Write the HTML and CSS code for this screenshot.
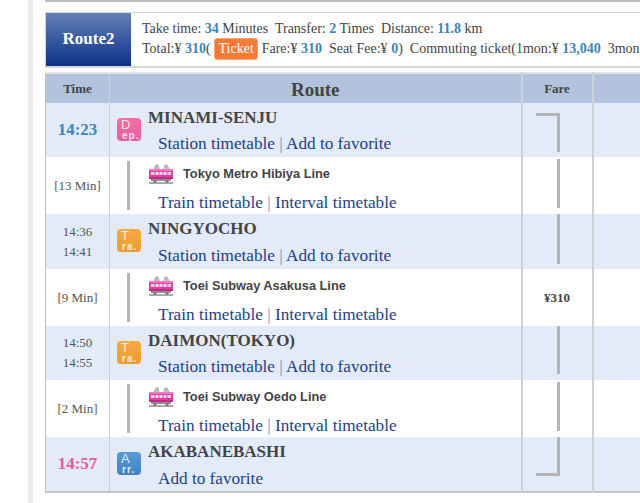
FILE: index.html
```html
<!DOCTYPE html>
<html lang="en">
<head>
<meta charset="utf-8">
<title>Route2</title>
<link rel="stylesheet" href="styles.css">
</head>
<body>
<svg class="defs" width="0" height="0" aria-hidden="true">
  <symbol id="train" viewBox="0 0 24 20">
    <path d="M5 5 L7 1 L9 1 L10 5 M15 5 L16 1 L18 1 L20 5" fill="#c9b8c4" stroke="#b3a7b0" stroke-width="1"/>
    <rect x="0" y="5" width="24" height="10" rx="1" fill="#e2409f"/>
    <rect x="0" y="5" width="24" height="2" fill="#f07cc0"/>
    <rect x="2" y="8" width="20" height="3" fill="#fbd8ee"/>
    <path d="M6 8v3M10 8v3M14 8v3M18 8v3" stroke="#e2409f" stroke-width="1"/>
    <rect x="0" y="13" width="24" height="2" fill="#c4288a"/>
    <rect x="2" y="15" width="20" height="2" fill="#8f8f8f"/>
    <rect x="0" y="18" width="24" height="2" fill="#a8a8a8"/>
    <circle cx="6" cy="17.5" r="1.5" fill="#777"/>
    <circle cx="18" cy="17.5" r="1.5" fill="#777"/>
  </symbol>
</svg>
<main class="page">
  <div class="prev-end"></div>
  <section class="summary">
    <h2 class="summary-title">Route2</h2>
    <div class="summary-info">
      <p class="info-line">Take time: <b>34</b> Minutes&nbsp; Transfer: <b>2</b> Times&nbsp; Distance: <b>11.8</b> km</p>
      <p class="info-line">Total:¥ <b>310</b>( <span class="ticket">Ticket</span> Fare:¥ <b>310</b>&nbsp; Seat Fee:¥ <b>0</b>)&nbsp; Commuting ticket(1mon:¥ <b>13,040</b>&nbsp; 3mon</p>
    </div>
  </section>
  <table class="route-table">
    <colgroup><col class="c-time"><col class="c-route"><col class="c-fare"><col class="c-extra"></colgroup>
    <thead>
      <tr>
        <th class="th-small">Time</th>
        <th class="th-route">Route</th>
        <th class="th-small">Fare</th>
        <th></th>
      </tr>
    </thead>
    <tbody>
      <tr class="station h54">
        <td class="time big blue">14:23</td>
        <td>
          <div class="st">
            <div class="badge dep"><span>D</span><span class="sub">ep.</span></div>
            <div class="st-text">
              <div class="st-name">MINAMI-SENJU</div>
              <div class="links"><a>Station timetable</a> | <a>Add to favorite</a></div>
            </div>
          </div>
        </td>
        <td><div class="seg seg-top"></div></td>
        <td></td>
      </tr>
      <tr class="line h57">
        <td class="time">[13 Min]</td>
        <td>
          <div class="ln">
            <div class="ln-text">
              <div class="ln-name"><svg class="train"><use href="#train"/></svg><span class="ln-label">Tokyo Metro Hibiya Line</span></div>
              <div class="links"><a>Train timetable</a> | <a>Interval timetable</a></div>
            </div>
          </div>
        </td>
        <td><div class="seg seg-a"></div></td>
        <td></td>
      </tr>
      <tr class="station h55">
        <td class="time">14:36<br>14:41</td>
        <td>
          <div class="st">
            <div class="badge tra"><span>T</span><span class="sub">ra.</span></div>
            <div class="st-text">
              <div class="st-name">NINGYOCHO</div>
              <div class="links"><a>Station timetable</a> | <a>Add to favorite</a></div>
            </div>
          </div>
        </td>
        <td><div class="seg seg-b"></div></td>
        <td></td>
      </tr>
      <tr class="line h57">
        <td class="time">[9 Min]</td>
        <td>
          <div class="ln">
            <div class="ln-text">
              <div class="ln-name"><svg class="train"><use href="#train"/></svg><span class="ln-label">Toei Subway Asakusa Line</span></div>
              <div class="links"><a>Train timetable</a> | <a>Interval timetable</a></div>
            </div>
          </div>
        </td>
        <td class="fare-val">¥310</td>
        <td></td>
      </tr>
      <tr class="station h54">
        <td class="time">14:50<br>14:55</td>
        <td>
          <div class="st">
            <div class="badge tra"><span>T</span><span class="sub">ra.</span></div>
            <div class="st-text">
              <div class="st-name">DAIMON(TOKYO)</div>
              <div class="links"><a>Station timetable</a> | <a>Add to favorite</a></div>
            </div>
          </div>
        </td>
        <td><div class="seg seg-c"></div></td>
        <td></td>
      </tr>
      <tr class="line h57">
        <td class="time">[2 Min]</td>
        <td>
          <div class="ln">
            <div class="ln-text">
              <div class="ln-name"><svg class="train"><use href="#train"/></svg><span class="ln-label">Toei Subway Oedo Line</span></div>
              <div class="links"><a>Train timetable</a> | <a>Interval timetable</a></div>
            </div>
          </div>
        </td>
        <td><div class="seg seg-a"></div></td>
        <td></td>
      </tr>
      <tr class="station h55">
        <td class="time big pink">14:57</td>
        <td>
          <div class="st">
            <div class="badge arr"><span>A</span><span class="sub">rr.</span></div>
            <div class="st-text">
              <div class="st-name">AKABANEBASHI</div>
              <div class="links"><a>Add to favorite</a></div>
            </div>
          </div>
        </td>
        <td><div class="seg seg-bottom"></div></td>
        <td></td>
      </tr>
    </tbody>
  </table>
</main>
</body>
</html>
```
FILE: styles.css
```css
* { box-sizing: border-box; }
html, body { margin: 0; padding: 0; background: #fff; }
body { height: 503px; overflow: hidden; font-family: "Liberation Serif", serif; color: #444; }
.defs { position: absolute; }
.page {
  margin-left: 28px;
  width: 640px;
  height: 503px;
  padding-left: 12px;
  border-left: 5px solid #ececec;
  overflow: hidden;
}
.prev-end { height: 2px; background: #bdbdbd; margin-bottom: 10px; }
.summary {
  display: flex;
  height: 56px;
  width: 640px;
  border: 2px solid #d6d6d6;
  border-width: 1px 0 2px 1px;
}
.summary-title {
  width: 85px;
  margin: 0;
  padding-bottom: 2px;
  flex: none;
  display: flex;
  align-items: center;
  justify-content: center;
  font-size: 17px;
  color: #fff;
  background: linear-gradient(#6480b8, #0c3189);
}
.summary-info { padding: 6px 0 0 11px; }
.info-line {
  margin: 0;
  height: 20px;
  line-height: 20px;
  font-size: 14px;
  white-space: nowrap;
  color: #444;
}
.info-line b { color: #3f83bf; }
.ticket {
  display: inline-block;
  height: 22px;
  width: 44px;
  line-height: 20px;
  text-align: center;
  color: #fff;
  background: #f47a35;
  border: 1px solid #fba56f;
  border-radius: 3px;
  vertical-align: middle;
  margin: -2px 0 0 0;
}
.route-table {
  margin-top: 4px;
  table-layout: fixed;
  width: 609px;
  border-collapse: collapse;
  border-left: 1px solid #bdbdbd;
  border-bottom: 2px solid #c4c4c4;
}
.c-time { width: 64px; }
.c-route { width: 412px; }
.c-fare { width: 71px; }
.c-extra { width: 62px; }
th {
  height: 30px;
  padding: 0;
  background: #b3c3dd;
  border-right: 2px solid #ccd3de;
  border-top: 2px solid #e2e2e2;
  color: #444;
}
.th-small { font-size: 13px; }
.th-route { font-size: 19px; padding-top: 2px; }
td {
  padding: 0;
  vertical-align: top;
  border-right: 2px solid #d0d0d0;
}
td:first-child, th:first-child { border-right-width: 1px; }
.station td { background: #e3ebf9; }
.h54 { height: 54px; }
.h55 { height: 55px; }
.h57 { height: 57px; }
.time {
  vertical-align: middle;
  text-align: center;
  font-size: 13px;
  line-height: 20px;
  color: #555;
}
.big { font-size: 17px; font-weight: bold; }
.blue { color: #3f83bf; }
.pink { color: #ea5a9c; }
.st { display: flex; padding-left: 7px; }
.badge {
  flex: none;
  width: 24px;
  height: 23px;
  margin-top: 15px;
  padding: 1px 0 0 4px;
  border-radius: 4px;
  display: flex;
  flex-direction: column;
  font-family: "Liberation Sans", sans-serif;
  font-size: 13px;
  line-height: 12px;
  color: rgba(255,255,255,.85);
}
.badge .sub { font-size: 10px; font-weight: bold; line-height: 9px; letter-spacing: 1px; margin-left: 1px; }
.dep { background: linear-gradient(#f06ea6, #ec5c9b); }
.tra { background: linear-gradient(#f4ab42, #ee9c30); }
.arr { background: linear-gradient(#5a9ad6, #3f83c4); }
.st-text { padding: 5px 0 0 7px; }
.st-name { font-size: 17px; font-weight: bold; line-height: 20px; color: #444; white-space: nowrap; }
.links { font-size: 17.2px; line-height: 20px; color: #6a94c4; white-space: nowrap; margin: 6px 0 0 10px; }
.h55 .links { margin-top: 7px; }
.links a { color: #1c3f8f; }
.ln {
  height: 49px;
  margin: 4px 0 0 17px;
  padding-top: 3px;
  border-left: 3px solid #b5b5b5;
}
.ln-text { padding-left: 19px; }
.ln-name {
  display: flex;
  align-items: center;
  height: 20px;
  font-family: "Liberation Sans", sans-serif;
  font-size: 12.8px;
  font-weight: bold;
  color: #444;
}
.ln-label { padding-bottom: 2px; }
.train { width: 24px; height: 20px; margin-right: 10px; flex: none; }
.ln-text .links { margin: 9px 0 0 9px; }
.seg { margin-left: 34px; width: 3px; background: #b5b5b5; }
.seg-top {
  margin: 10px 0 0 13px;
  width: 24px;
  height: 39px;
  background: none;
  border-top: 3px solid #b5b5b5;
  border-right: 3px solid #b5b5b5;
}
.seg-a { margin-top: 2px; height: 49px; }
.seg-b { height: 50px; }
.seg-c { height: 48px; }
.seg-bottom {
  margin: 0 0 0 13px;
  width: 24px;
  height: 39px;
  background: none;
  border-bottom: 3px solid #b5b5b5;
  border-right: 3px solid #b5b5b5;
}
.fare-val {
  vertical-align: middle;
  text-align: center;
  font-size: 13px;
  font-weight: bold;
  color: #444;
}
```
